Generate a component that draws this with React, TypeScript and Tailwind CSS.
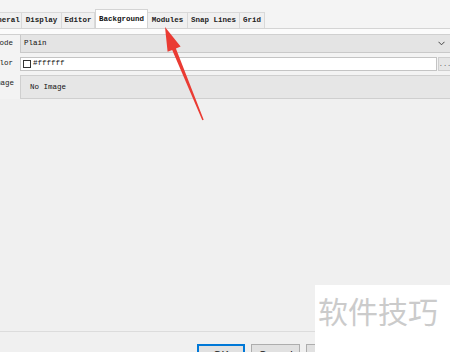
import React from "react";

const mono = { fontFamily: '"Liberation Mono", "DejaVu Sans Mono", monospace' };

function Tab({ label, w, active }: { label: string; w: number; active?: boolean }) {
  if (active) {
    return (
      <div
        className="h-[20px] bg-white border border-b-0 border-[#d4d4d4] flex items-center justify-center font-bold text-[7.5px] text-[#111] -mb-px relative z-10"
        style={{ width: w }}
      >
        {label}
      </div>
    );
  }
  return (
    <div
      className="h-[16px] bg-[#f0f0f0] border-t border-r border-[#d9d9d9] flex items-center justify-center text-[7.5px] text-[#222] font-bold"
      style={{ width: w }}
    >
      {label}
    </div>
  );
}

export default function App() {
  return (
    <div className="relative w-[450px] h-[352px] overflow-hidden bg-[#f0f0f0]" style={mono}>
      {/* top strip */}
      <div className="h-[9px] bg-[#f4f4f4]" />
      {/* tabs */}
      <div className="h-[20px] overflow-hidden flex items-end bg-[#f4f4f4] border-b border-[#d4d4d4]">
        <div className="flex items-end -ml-[13px]">
          <Tab label="General" w={35} />
          <Tab label="Display" w={40} />
          <Tab label="Editor" w={33} />
          <Tab label="Background" w={53} active />
          <Tab label="Modules" w={40} />
          <Tab label="Snap Lines" w={52} />
          <Tab label="Grid" w={25} />
        </div>
      </div>
      {/* panel */}
      <div className="bg-[#f3f3f3]">
        <div className="h-[6px] bg-[#fbfbfb] border-b border-[#d0d0d0]" />
        {/* Mode */}
        <div className="flex h-[18px] items-stretch">
          <div className="w-[20px] overflow-hidden flex justify-end items-center pr-[7px] text-[7.5px] text-[#222] whitespace-nowrap">
            Mode
          </div>
          <div className="flex-1 -mr-[2px] bg-[#e4e4e4] border border-t-0 border-[#c9c9c9] flex items-center justify-between pl-[3px] pr-[6px] text-[7.5px] text-[#111]">
            <span>Plain</span>
            <svg width="7" height="5" viewBox="0 0 7 5">
              <path d="M0.5 0.8 L3.5 3.8 L6.5 0.8" fill="none" stroke="#444" strokeWidth="1" />
            </svg>
          </div>
        </div>
        <div className="h-[4px]" />
        {/* Color */}
        <div className="flex h-[14px] items-stretch">
          <div className="w-[20px] overflow-hidden flex justify-end items-center pr-[7px] text-[7.5px] text-[#222] whitespace-nowrap">
            Color
          </div>
          <div className="flex-1 bg-white border border-[#c4c4c4] flex items-center pl-[2px] text-[7.5px] text-[#111]">
            <span className="w-[8px] h-[8px] border border-[#333] bg-white mr-[2px]" />
            <span>#ffffff</span>
          </div>
          <div className="w-[14px] -mr-[2px] ml-[1px] bg-[#e6e6e6] border border-[#cfcfcf] flex items-center justify-center text-[7px] text-[#666]">
            ...
          </div>
        </div>
        <div className="h-[4px]" />
        {/* Image */}
        <div className="flex h-[24px] items-stretch">
          <div className="w-[20px] overflow-hidden flex justify-end items-start pt-[3px] pr-[6px] text-[7.5px] text-[#222] whitespace-nowrap">
            Image
          </div>
          <div className="flex-1 -mr-[2px] bg-[#e6e6e6] border border-[#cfcfcf] flex items-center pl-[9px] pt-[2px] text-[7.5px] text-[#111]">
            No Image
          </div>
        </div>
      </div>
      {/* spacer */}
      <div className="h-[232px]" />
      {/* separator */}
      <div className="h-px bg-[#dcdcdc]" />
      <div className="h-[12px] bg-[#f0f0f0]" />
      {/* buttons */}
      <div className="flex pl-[197px] gap-[6px]" style={{ fontFamily: '"Liberation Sans", Arial, sans-serif' }}>
        <div className="w-[48px] h-[22px] bg-[#e1e1e1] border-2 border-[#0078d7] flex justify-center pt-[4px] text-[11px] leading-none text-[#111]">
          OK
        </div>
        <div className="w-[49px] h-[22px] bg-[#e1e1e1] border border-[#adadad] flex justify-center pt-[5px] text-[11px] leading-none text-[#111]">
          Cancel
        </div>
        <div className="w-[49px] h-[22px] bg-[#e1e1e1] border border-[#adadad] flex justify-center pt-[5px] text-[11px] leading-none text-[#111]">
          Apply
        </div>
      </div>
      {/* watermark */}
      <div
        className="absolute left-[315px] top-[285px] w-[135px] h-[67px] bg-white flex items-start pl-[3px] pt-[10px] text-[30px] leading-none text-[#cbcbcb]"
        style={{ fontFamily: '"Noto Sans CJK SC", "Noto Sans", sans-serif' }}
      >
        软件技巧
      </div>
      {/* red arrow */}
      <svg className="absolute left-0 top-0 pointer-events-none" width="450" height="352">
        <polygon
          points="165,27 180.6,46.6 175.9,48.4 203.7,119.7 202.3,120.3 172.2,49.9 167.6,51.8"
          fill="#ea3b33"
        />
      </svg>
    </div>
  );
}
